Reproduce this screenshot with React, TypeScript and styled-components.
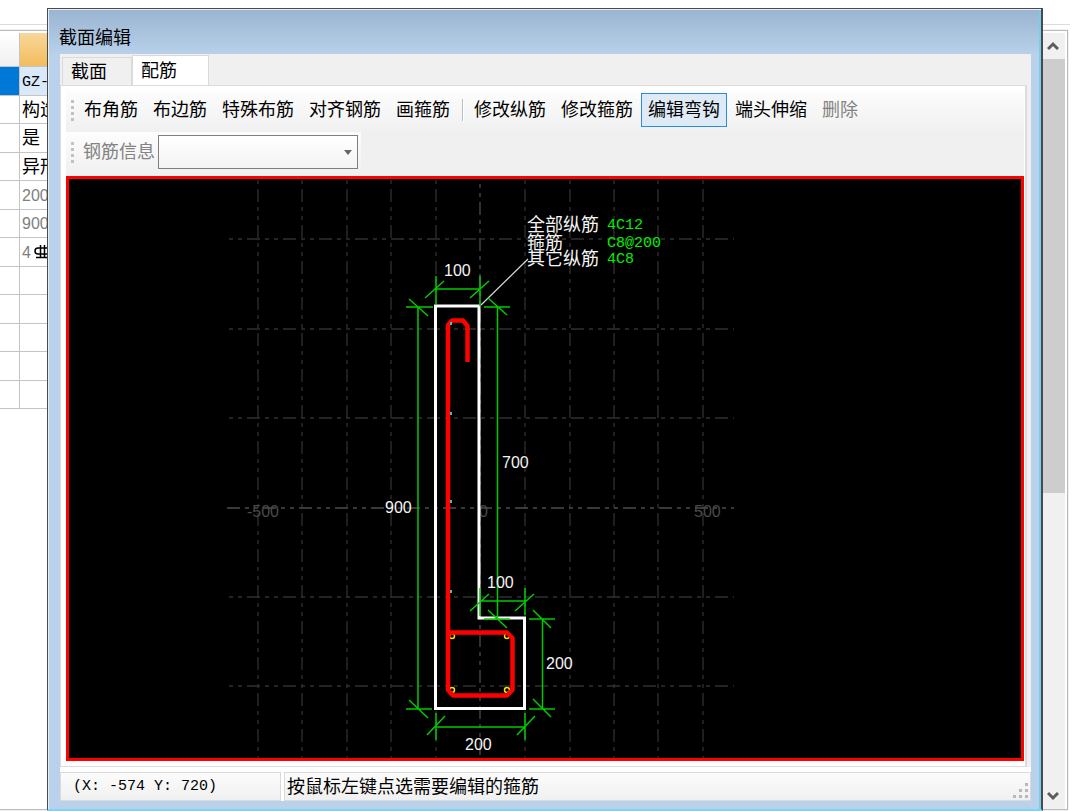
import React from "react";
import styled, { createGlobalStyle, css } from "styled-components";

const sans = `"Liberation Sans", "Noto Sans CJK SC", sans-serif`;
const mono = `"Liberation Mono", "Noto Sans CJK SC", monospace`;

const GlobalStyle = createGlobalStyle`
  * { box-sizing: border-box; }
  body {
    margin: 0;
    background: #fff;
    color: #000;
    font: 18px/24px ${sans};
  }
`;

const Page = styled.div`
  position: relative;
  display: flex;
  flex-direction: column;
  min-height: 100vh;
  padding-right: 3px;
  overflow: hidden;
`;

const TopStrip = styled.div`
  height: 25px;
  border-bottom: 1px solid #dcdcdc;
`;

const BackPanel = styled.div`
  flex: 1;
  display: flex;
  justify-content: space-between;
  margin: 5px 2px 1px 0;
  padding-top: 2px;
  border: 1px solid #b9b9c4;
  border-left: 0;
  outline: 1px solid #f2f2f2;
`;

const Properties = styled.table`
  width: 300px;
  align-self: flex-start;
  border-collapse: separate;
  border-spacing: 0;
  table-layout: fixed;
`;

const RowMark = styled.td<{ $selected?: boolean }>`
  width: 20px;
  padding: 0;
  border-right: 1px solid #c4c4c4;
  border-bottom: 1px solid #c4c4c4;
  background: ${(p) => (p.$selected ? "#0078d7" : "#fff")};
`;

const Value = styled.td<{ $selected?: boolean; $muted?: boolean }>`
  padding: 0 2px;
  border-bottom: 1px solid #c4c4c4;
  background: ${(p) => (p.$selected ? "#d9e9f8" : "#fff")};
  color: ${(p) => (p.$muted ? "#808080" : "#000")};
  line-height: 24px;
  white-space: nowrap;
`;

const Row = styled.tr`
  height: 28px;
  &:nth-child(odd) { height: 29px; }
`;

const Digits = styled.span`
  font-size: 16px;
`;

const Code = styled.span`
  font-family: ${mono};
  font-size: 15px;
`;

const MarkHead = styled.th`
  width: 20px;
  height: 34px;
  padding: 0;
  background: linear-gradient(#fff, #f0f0f0);
  border-right: 1px solid #c4c4c4;
  border-bottom: 1px solid #c4c4c4;
`;

const ValueHead = styled(MarkHead)`
  width: auto;
  background: linear-gradient(#f8d79a, #f2bd5c);
`;

const ScrollBar = styled.div`
  display: flex;
  flex-direction: column;
  align-items: stretch;
  width: 24px;
  margin-right: 2px;
  background: #f0f0f0;
`;

const ScrollButton = styled.button`
  display: flex;
  align-items: center;
  justify-content: center;
  height: 26px;
  padding: 0;
  border: 0;
  background: none;
`;

const ScrollTrack = styled.div`
  flex: 1;
`;

const ScrollThumb = styled.div`
  height: 60%;
  background: #cdcdcd;
`;

const Dialog = styled.section`
  position: absolute;
  top: 8px;
  right: 30px;
  bottom: 0;
  left: 47px;
  display: flex;
  flex-direction: column;
  padding: 2px 10px 8px 12px;
  border: 1px solid #4a4a4a;
  border-width: 1px 2px 0 1px;
  border-bottom: 2px solid #80d4ee;
  background: linear-gradient(#99b4d1, #b9d1ea 46px);
  box-shadow: inset 1px 1px 0 #e8eef4, inset -2px 0 0 #74d0ee;
`;

const DialogTitle = styled.h1`
  margin: 0 0 0 -1px;
  padding: 15px 0 4px;
  font-size: 18px;
  font-weight: 400;
  line-height: 24px;
`;

const Client = styled.div`
  flex: 1;
  display: flex;
  flex-direction: column;
  min-height: 0;
  background: #f0f0f0;
`;

const TabStrip = styled.div`
  display: flex;
  align-items: flex-end;
  height: 31px;
  padding-left: 2px;
`;

const Tab = styled.button<{ $active?: boolean }>`
  height: ${(p) => (p.$active ? 30 : 28)}px;
  width: ${(p) => (p.$active ? 77 : 70)}px;
  padding: 0 8px;
  border: 1px solid #dadada;
  border-bottom: 0;
  background: ${(p) => (p.$active ? "#fff" : "#f0f0f0")};
  color: #000;
  font: 18px/26px ${sans};
  text-align: left;
`;

const TabPanel = styled.div`
  flex: 1;
  display: flex;
  flex-direction: column;
  min-height: 0;
  margin-right: 4px;
  padding: 4px 1px 5px 5px;
  border: 1px solid #dcdcdc;
  border-width: 1px 2px 1px 1px;
  background: #fff;
`;

const ToolArea = styled.div`
  display: flex;
  flex-direction: column;
  align-items: flex-start;
  padding-bottom: 2px;
  background: #f0f0f0;
`;

const toolRow = css`
  display: flex;
  align-items: center;
  height: 42px;
  padding-bottom: 2px;
  padding-left: 5px;
  background: linear-gradient(#fdfdfd, #f0f0f0);
`;

const ToolBar = styled.div`
  ${toolRow}
  gap: 1px;
  align-self: stretch;
`;

const InfoBar = styled.div`
  ${toolRow}
  padding-right: 3px;
`;

const Grip = styled.span`
  width: 3px;
  height: 21px;
  margin-right: 2px;
  background: repeating-linear-gradient(#c2c2c2 0 3px, transparent 3px 6px);
`;

const Tool = styled.button<{ $active?: boolean }>`
  height: 34px;
  padding: 0 6px;
  border: 1px solid ${(p) => (p.$active ? "#2a8ce0" : "transparent")};
  background: ${(p) => (p.$active ? "#deebf6" : "transparent")};
  color: #000;
  font: 18px/24px ${sans};
  white-space: nowrap;
  &:disabled { color: #838383; }
`;

const Divider = styled.span`
  width: 2px;
  height: 22px;
  margin: 0 2px 0 4px;
  border-left: 1px solid #bdbdbd;
  background: #fff;
`;

const InfoLabel = styled.label`
  margin: 0 3px 0 7px;
  color: #838383;
`;

const ComboWrap = styled.span`
  position: relative;
  display: flex;
`;

const Combo = styled.select`
  width: 200px;
  height: 34px;
  appearance: none;
  border: 1px solid #7f7f7f;
  border-radius: 0;
  background: linear-gradient(#fff, #f4f4f4);
  font: 18px/24px ${sans};
`;

const Caret = styled.svg`
  position: absolute;
  right: 6px;
  top: 15px;
  pointer-events: none;
`;

const Viewport = styled.div`
  flex: 1;
  min-height: 0;
  display: flex;
  border: 3px solid #f00;
  background: #000;
  overflow: hidden;
`;

const Drawing = styled.svg`
  flex: 1;
  min-width: 0;
  height: 100%;
  font: 16px ${sans};
`;

const Marks = styled.g`
  font: 15px ${mono};
`;

const StatusBar = styled.footer`
  display: flex;
  gap: 3px;
  height: 34px;
  padding-top: 5px;
  background: #fff;
`;

const StatusCell = styled.div<{ $grow?: boolean }>`
  display: flex;
  align-items: center;
  justify-content: space-between;
  ${(p) => (p.$grow ? "flex: 1; padding-left: 2px;" : "width: 221px; padding-left: 12px;")}
  border: 1px solid #dadada;
  background: linear-gradient(#fcfcfc, #f0f0f0);
`;

const Coordinates = styled.span`
  font: 15px/24px ${mono};
  white-space: pre;
`;

const SizeGrip = styled.svg`
  align-self: flex-end;
  margin: 0 1px 1px 0;
`;

const Sign = styled.svg`
  margin-left: 3px;
  vertical-align: -1px;
`;

const Chevron = ({ down }: { down?: boolean }) => (
  <svg width="12" height="10" viewBox="0 0 12 10" fill="none" stroke="#5c5c5c" strokeWidth="3">
    <path d={down ? "M1 2l5 5 5-5" : "M1 8l5-5 5 5"} />
  </svg>
);

const RebarSign = () => (
  <Sign width="17" height="14" viewBox="0 0 17 14" fill="none" stroke="#000" strokeWidth="1.5">
    <path d="M6.500 0v12M10.500 0v12M2 12.500h13" />
    <rect x="1" y="3" width="15" height="6" rx="3" />
  </Sign>
);

const values: { text: React.ReactNode; muted?: boolean }[] = [
  { text: <Code>GZ-1</Code> },
  { text: "构造柱" },
  { text: "是" },
  { text: "异形" },
  { text: <Digits>200</Digits>, muted: true },
  { text: <Digits>900</Digits>, muted: true },
  { text: <><Digits>4</Digits><RebarSign /></>, muted: true },
  { text: "" },
  { text: "" },
  { text: "" },
  { text: "" },
  { text: "" },
];

const gridX = [-222, -178, -133, -89, -44, 45, 90, 134, 178, 223];
const gridY = [-269, -179, -90, 89, 178];
const dash = "13 5 4 5 4 5";

/* Section drawing; the origin is the crossing of the two main axes. */
const Section = () => (
  <Drawing role="img" aria-label="截面配筋图">
    <g transform="translate(411 329)">
      <g stroke="#303030" strokeWidth="1.3" strokeDasharray={dash}>
        {gridX.map((x) => (
          <path key={x} d={`M${x} -328V250`} strokeDashoffset="27" />
        ))}
        {gridY.map((y) => (
          <path key={y} d={`M-252 ${y}H254`} strokeDashoffset="17" />
        ))}
      </g>
      <g stroke="#4c4c4c" strokeWidth="1.3" strokeDasharray={dash}>
        <path d="M0 -328V250" strokeDashoffset="14" />
        <path d="M-253 0H254" />
      </g>
      <g fill="#4a4a4a">
        <text x="-201" y="9" textAnchor="end">-500</text>
        <text x="-1" y="9">0</text>
        <text x="214" y="9">500</text>
      </g>

      <path d="M-44.500 -202H-1V110H44.500V200.500H-44.500Z" fill="none" stroke="#fff" strokeWidth="3" />
      <path d="M1 -203L48 -249" stroke="#d8d8d8" strokeWidth="1.2" />

      <g fill="none" stroke="#f2e600" strokeWidth="1.5">
        <circle cx="-28" cy="128" r="2.500" />
        <circle cx="27" cy="128" r="2.500" />
        <circle cx="-28" cy="182" r="2.500" />
        <circle cx="27" cy="182" r="2.500" />
      </g>
      <path
        d="M-12.500 -146V-182L-17 -187.500H-28L-32 -183V182L-27 187.500H27L32.500 182V130L27 124.500H-32"
        fill="none"
        stroke="#f00"
        strokeWidth="4.5"
        strokeLinejoin="round"
      />
      <g fill="#35c4c4">
        {[-185, -95, -7, 83].map((y) => (
          <rect key={y} x="-30" y={y - 1} width="2" height="3" />
        ))}
      </g>

      <g fill="none" stroke="#00cc00" strokeWidth="1.5">
        <path d="M-44 -232V-204M0 -232V-202M-44 -219H0M-55 -210L-36 -227M-10 -210L9 -227" />
        <path d="M-62 -201V201M-74 -201H-47M-71 -209L-52 -192M-74 201H-48M-71 192L-52 210" />
        <path d="M17.500 -201V111M4 -201H30M8 -210L27 -193M4 111H30M8 102L27 120" />
        <path d="M0 80V108M45 80V107M0 93H45M-10 103L9 86M35 103L54 86" />
        <path d="M62.500 111V201M49 111H75M53 102L71 120M49 201H75M53 191L71 209" />
        <path d="M-44 205V232M45 205V232M-44 219H45M-53 227L-35 208M37 227L55 208" />
      </g>

      <g fill="#f4f4f4">
        <text x="-36" y="-232">100</text>
        <text x="22" y="-40">700</text>
        <text x="-95" y="5">900</text>
        <text x="7" y="80">100</text>
        <text x="66" y="161">200</text>
        <text x="-15" y="242">200</text>
      </g>
      <g fill="#f4f4f4" fontSize="18">
        <text x="47" y="-277">全部纵筋</text>
        <text x="47" y="-259">箍筋</text>
        <text x="47" y="-243">其它纵筋</text>
      </g>
      <Marks fill="#00f000">
        <text x="127" y="-279">4C12</text>
        <text x="127" y="-261">C8@200</text>
        <text x="127" y="-245">4C8</text>
      </Marks>
    </g>
  </Drawing>
);

export default function App() {
  return (
    <Page>
      <GlobalStyle />
      <TopStrip />
      <BackPanel>
        <Properties>
          <thead>
            <tr>
              <MarkHead />
              <ValueHead />
            </tr>
          </thead>
          <tbody>
            {values.map((v, i) => (
              <Row key={i}>
                <RowMark $selected={i === 0} />
                <Value $selected={i === 0} $muted={v.muted}>{v.text}</Value>
              </Row>
            ))}
          </tbody>
        </Properties>
        <ScrollBar>
          <ScrollButton aria-label="向上滚动"><Chevron /></ScrollButton>
          <ScrollTrack><ScrollThumb /></ScrollTrack>
          <ScrollButton aria-label="向下滚动"><Chevron down /></ScrollButton>
        </ScrollBar>
      </BackPanel>

      <Dialog role="dialog" aria-labelledby="dialog-title">
        <DialogTitle id="dialog-title">截面编辑</DialogTitle>
        <Client>
          <TabStrip role="tablist">
            <Tab role="tab">截面</Tab>
            <Tab role="tab" aria-selected $active>配筋</Tab>
          </TabStrip>
          <TabPanel role="tabpanel">
            <ToolArea>
              <ToolBar role="toolbar">
                <Grip />
                <Tool>布角筋</Tool>
                <Tool>布边筋</Tool>
                <Tool>特殊布筋</Tool>
                <Tool>对齐钢筋</Tool>
                <Tool>画箍筋</Tool>
                <Divider />
                <Tool>修改纵筋</Tool>
                <Tool>修改箍筋</Tool>
                <Tool $active>编辑弯钩</Tool>
                <Tool>端头伸缩</Tool>
                <Tool disabled>删除</Tool>
              </ToolBar>
              <InfoBar>
                <Grip />
                <InfoLabel htmlFor="rebar-info">钢筋信息</InfoLabel>
                <ComboWrap>
                  <Combo id="rebar-info"><option value="" /></Combo>
                  <Caret width="8" height="5" viewBox="0 0 8 5"><path d="M0 0h8L4 5z" fill="#666" /></Caret>
                </ComboWrap>
              </InfoBar>
            </ToolArea>
            <Viewport><Section /></Viewport>
          </TabPanel>
          <StatusBar>
            <StatusCell><Coordinates>(X: -574 Y: 720)</Coordinates></StatusCell>
            <StatusCell $grow>
              按鼠标左键点选需要编辑的箍筋
              <SizeGrip width="16" height="16" viewBox="0 0 16 16" fill="#b8b8b8">
                <path d="M12 0h3v3h-3zM6 6h3v3H6zM12 6h3v3h-3zM0 12h3v3H0zM6 12h3v3H6zM12 12h3v3h-3z" />
              </SizeGrip>
            </StatusCell>
          </StatusBar>
        </Client>
      </Dialog>
    </Page>
  );
}
